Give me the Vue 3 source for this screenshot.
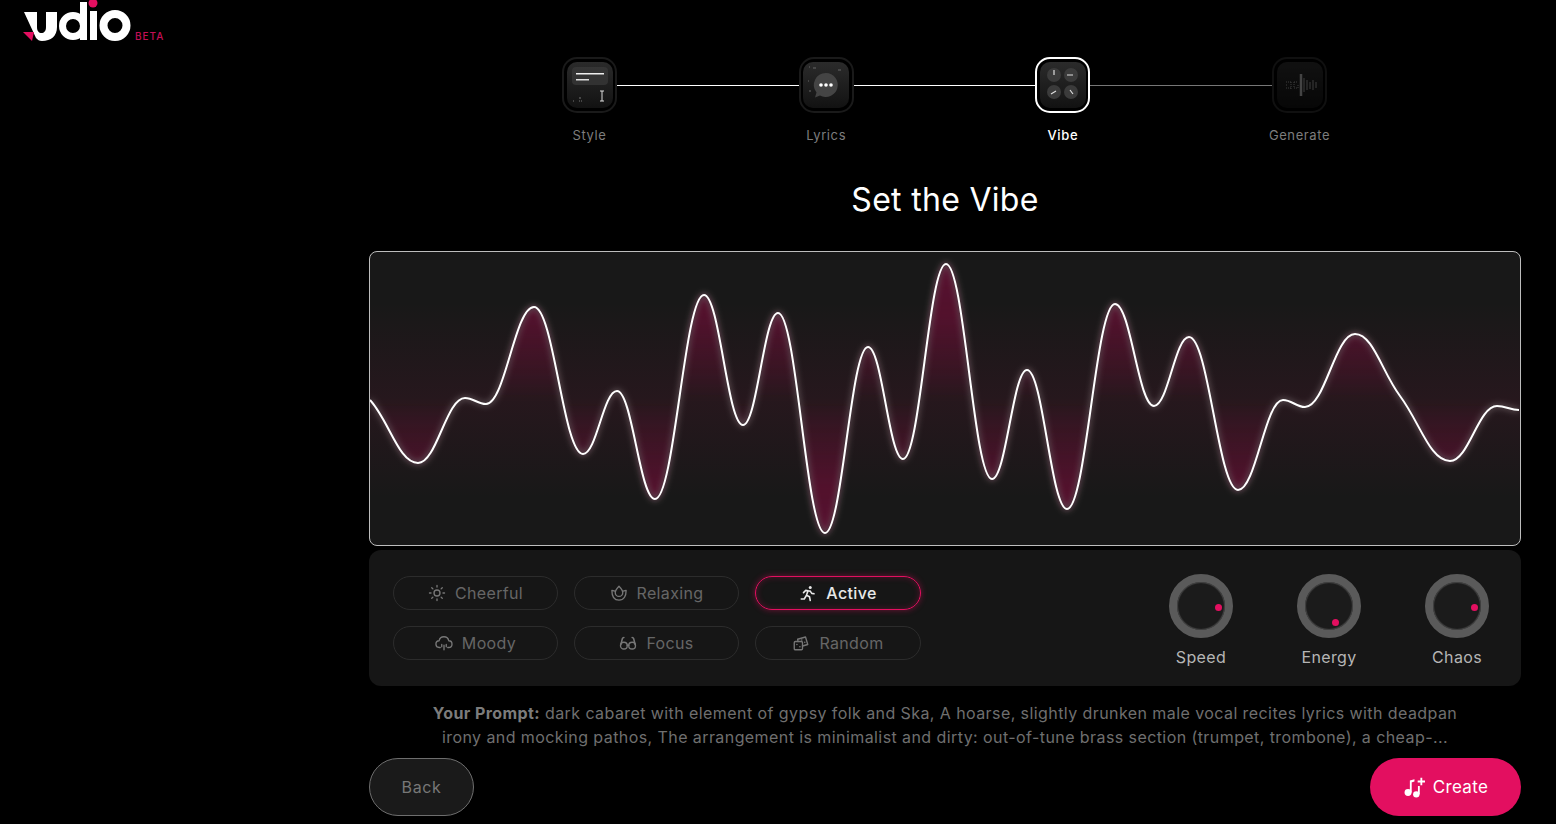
<template>
  <div class="page">
    <aside class="side">
      <div class="logo">
        <svg width="112" height="44" viewBox="0 0 112 44">
          <path d="M1 12h13v15c0 4 2 6 4.500 6s4.500-2 4.500-6V12h11v15c0 9-6 14-15 14-3 0-4-1-6-3L1 12z" fill="#fff" />
          <path d="M0 32h11l-2 9z" fill="#e30f60" />
          <circle cx="50" cy="26" r="10.500" fill="none" stroke="#fff" stroke-width="7" />
          <rect x="57" y="2" width="7" height="38" fill="#fff" />
          <rect x="67" y="11" width="7" height="29" fill="#fff" />
          <circle cx="70" cy="3" r="4.500" fill="#e30f60" />
          <circle cx="92" cy="25.500" r="11.500" fill="none" stroke="#fff" stroke-width="8" />
        </svg>
        <span class="beta">BETA</span>
      </div>
    </aside>

    <main class="main">
      <div class="steps">
        <template v-for="(s, i) in steps" :key="s.name">
          <div class="step" :class="s.state">
            <div class="tile">
              <svg width="46" height="46" viewBox="0 0 46 46">
                <defs>
                  <linearGradient :id="'tile' + i" x1="0" y1="0" x2="0" y2="1">
                    <stop offset="0" stop-color="#2b2b2b" />
                    <stop offset="1" stop-color="#121212" />
                  </linearGradient>
                </defs>
                <rect width="46" height="46" rx="10" :fill="'url(#tile' + i + ')'" />
                <g v-if="s.name === 'Style'">
                  <rect x="5" y="5" width="36" height="18" rx="4" fill="#3a3a3a" opacity=".7" />
                  <rect x="9" y="11" width="28" height="1.500" fill="#eee" />
                  <rect x="9" y="17" width="13" height="1.500" fill="#ddd" />
                  <path d="M33 29h4M35 29v10M33 39h4" stroke="#ddd" stroke-width="1" fill="none" />
                  <path d="M6 39h1M12 36h2M12 39h1M14 39h1" stroke="#777" stroke-width="1" />
                </g>
                <g v-if="s.name === 'Lyrics'">
                  <path d="M23 11a12 12 0 1 1-6 22.500l-5 2 1.500-5A12 12 0 0 1 23 11z" fill="#444" />
                  <circle cx="18" cy="23" r="1.800" fill="#fff" />
                  <circle cx="23" cy="23" r="1.800" fill="#fff" />
                  <circle cx="28" cy="23" r="1.800" fill="#fff" />
                  <path d="M6 5h1M10 6h3M35 8h3M6 29h2M5 19h1" stroke="#666" stroke-width="1" />
                </g>
                <g v-if="s.name === 'Vibe'">
                  <circle cx="14" cy="13" r="7" fill="#3b3b3b" />
                  <circle cx="31" cy="13" r="7" fill="#3b3b3b" />
                  <circle cx="14" cy="30" r="7" fill="#3b3b3b" />
                  <circle cx="31" cy="30" r="7" fill="#3b3b3b" />
                  <path d="M14 8v5M27 13h6M11 32l5-3M30 28l3 4" stroke="#ddd" stroke-width="1.200" />
                </g>
                <g v-if="s.name === 'Generate'" stroke="#999" stroke-width="1">
                  <path d="M9 20h5M9 23h1M9 26h5M14 20v7M17 20h4M17 26h4M17 20v6M21 23v3" stroke-dasharray="1 1" />
                  <path d="M27 16v14M30 18v10M33 20v7M36 18v10M39 20v6" />
                  <path d="M24 12v22" stroke="#aaa" stroke-width="2.500" />
                </g>
              </svg>
            </div>
            <span class="step-label">{{ s.name }}</span>
          </div>
          <div v-if="i < steps.length - 1" class="link" :class="{ dim: s.state === 'current' }"></div>
        </template>
      </div>

      <h1 class="title">Set the Vibe</h1>

      <div class="wave">
        <svg width="1150" height="293" viewBox="0 0 1150 293">
          <defs>
            <linearGradient id="waveFill" gradientUnits="userSpaceOnUse" x1="0" y1="0" x2="0" y2="293">
              <stop offset="0" stop-color="#e30f60" stop-opacity=".32" />
              <stop offset=".22" stop-color="#e30f60" stop-opacity=".28" />
              <stop offset=".34" stop-color="#e30f60" stop-opacity=".18" />
              <stop offset=".43" stop-color="#e30f60" stop-opacity=".09" />
              <stop offset=".505" stop-color="#e30f60" stop-opacity="0" />
              <stop offset=".58" stop-color="#e30f60" stop-opacity=".09" />
              <stop offset=".68" stop-color="#e30f60" stop-opacity=".18" />
              <stop offset=".8" stop-color="#e30f60" stop-opacity=".28" />
              <stop offset="1" stop-color="#e30f60" stop-opacity=".32" />
            </linearGradient>
            <linearGradient id="band" x1="0" y1="0" x2="0" y2="1">
              <stop offset="0" stop-color="#e30f60" stop-opacity="0" />
              <stop offset=".5" stop-color="#e30f60" stop-opacity=".07" />
              <stop offset="1" stop-color="#e30f60" stop-opacity="0" />
            </linearGradient>
            <filter id="soft" x="-5%" y="-20%" width="110%" height="140%">
              <feGaussianBlur stdDeviation="3" />
            </filter>
            <filter id="glow" x="-5%" y="-20%" width="110%" height="140%">
              <feGaussianBlur stdDeviation="3" />
            </filter>
          </defs>
          <rect x="0" y="50" width="1150" height="196" fill="url(#band)" />
          <path :d="fillPath" fill="url(#waveFill)" filter="url(#soft)" />
          <path :d="linePath" fill="none" stroke="#fff" stroke-opacity=".35" stroke-width="3" filter="url(#glow)" />
          <path :d="linePath" fill="none" stroke="#fff" stroke-width="2" />
        </svg>
      </div>

      <div class="controls">
        <div class="moods">
          <button v-for="m in moods" :key="m.name" class="pill" :class="{ on: m.name === 'Active' }">
            <svg class="mood-icon" width="18" height="18" viewBox="0 0 24 24" fill="none" stroke="currentColor" stroke-width="1.800" stroke-linecap="round" stroke-linejoin="round">
              <g v-if="m.name === 'Cheerful'">
                <circle cx="12" cy="12" r="4" />
                <path d="M12 2v2M12 20v2M2 12h2M20 12h2M5 5l1.500 1.500M17.500 17.500L19 19M5 19l1.500-1.500M17.500 6.500L19 5" />
              </g>
              <g v-if="m.name === 'Relaxing'">
                <path d="M12 3c3 3 5 5.500 5 8.500a5 5 0 0 1-10 0C7 8.500 9 6 12 3z" />
                <path d="M6.500 9.500L2.500 8.500c0 7.500 3 13 9.500 13s9.500-5.500 9.500-13l-4 1" />
              </g>
              <g v-if="m.name === 'Moody'">
                <path d="M7 18H6a4.500 4.500 0 0 1-.5-9 6.500 6.500 0 0 1 12.800 0 4.500 4.500 0 0 1-.3 9h-1" />
                <path d="M9 14v3M12 15v6M15 14v3" />
              </g>
              <g v-if="m.name === 'Focus'">
                <circle cx="6.500" cy="15.500" r="4.500" />
                <circle cx="17.500" cy="15.500" r="4.500" />
                <path d="M11 15c.7-.6 1.300-.6 2 0M2.500 14l2-8c.3-1 1-1.500 2-1.500M21.500 14l-2-8c-.3-1-1-1.500-2-1.500" stroke-width="2" />
              </g>
              <g v-if="m.name === 'Active'" stroke-width="2.100">
                <circle cx="15" cy="4.500" r="2" fill="currentColor" stroke="none" />
                <path d="M3 20h4l3-5 4 2 1 5M10 15l2-6-3-.5-3 3M12 9l3 .5 2 3 3 .5" />
              </g>
              <g v-if="m.name === 'Random'">
                <rect x="3" y="10" width="11" height="11" rx="1.500" />
                <path d="M8 10l-.5-3L18 4l3 10-7 2" />
                <path d="M6.500 14h.1M10.500 17h.1M13 8h.1M17 11h.1" stroke-width="2" />
              </g>
            </svg>
            <span>{{ m.name }}</span>
          </button>
        </div>
        <div class="knobs">
          <div v-for="k in knobs" :key="k.name" class="knob-wrap">
            <div class="knob">
              <i class="dot" :style="{ left: k.x + 'px', top: k.y + 'px' }"></i>
            </div>
            <span class="knob-label">{{ k.name }}</span>
          </div>
        </div>
      </div>

      <p class="prompt"><b>Your Prompt:</b> dark cabaret with element of gypsy folk and Ska, A hoarse, slightly drunken male vocal recites lyrics with deadpan irony and mocking pathos, The arrangement is minimalist and dirty: out-of-tune brass section (trumpet, trombone), a cheap-...</p>

      <div class="actions">
        <button class="back">Back</button>
        <button class="create">
          <svg width="22" height="22" viewBox="0 0 24 24" fill="#fff">
            <circle cx="5.500" cy="18" r="3.800" />
            <circle cx="14.500" cy="20" r="3.500" />
            <path d="M7.500 18V7l2-2v13zM16.300 20V11h2v9zM7.500 5l5-1.500v2.500l-5 1.500zM19 2h2v3h3v2h-3v3h-2V7h-3V5h3z" />
          </svg>
          <span>Create</span>
        </button>
      </div>
    </main>
  </div>
</template>

<script setup>
const steps = [
  { name: 'Style', state: 'done' },
  { name: 'Lyrics', state: 'done' },
  { name: 'Vibe', state: 'current' },
  { name: 'Generate', state: 'todo' }
]
const moods = [
  { name: 'Cheerful' },
  { name: 'Relaxing' },
  { name: 'Active' },
  { name: 'Moody' },
  { name: 'Focus' },
  { name: 'Random' }
]
// dot position inside the 64px knob
const knobs = [
  { name: 'Speed', x: 46, y: 30 },
  { name: 'Energy', x: 35, y: 45 },
  { name: 'Chaos', x: 46, y: 30 }
]

// turning points of the wave in page pixels, moved into the svg below
const raw = [
  [370, 400], [418, 463], [465, 398], [486, 404], [534, 307], [583, 454], [617, 391], [655, 499],
  [704, 295], [743, 425], [778, 313], [825, 533], [868, 347], [903, 459], [946, 264], [992, 479],
  [1027, 370], [1067, 509], [1115, 304], [1154, 406], [1189, 337], [1238, 490], [1283, 400],
  [1305, 407], [1355, 334], [1400, 396], [1450, 461], [1497, 406], [1519, 410]
]
const pts = raw.map(([x, y]) => [x - 370, y - 252])
const slope = (i) => {
  if (i === 0) return 1.1
  if (i === pts.length - 1) return 0
  const a = pts[i][1] - pts[i - 1][1]
  const b = pts[i + 1][1] - pts[i][1]
  if (a * b <= 0) return 0
  return (pts[i + 1][1] - pts[i - 1][1]) / (pts[i + 1][0] - pts[i - 1][0])
}
let linePath = `M${pts[0][0]} ${pts[0][1]}`
for (let i = 0; i < pts.length - 1; i++) {
  const d = (pts[i + 1][0] - pts[i][0]) * 0.4
  const c1 = `${pts[i][0] + d} ${pts[i][1] + slope(i) * d}`
  const c2 = `${pts[i + 1][0] - d} ${pts[i + 1][1] - slope(i + 1) * d}`
  linePath += `C${c1} ${c2} ${pts[i + 1][0]} ${pts[i + 1][1]}`
}
const fillPath = `${linePath}L1149 148L0 148Z`
</script>

<style>
html, body {
  margin: 0;
  background: #000;
}
</style>

<style scoped>
.page {
  display: grid;
  grid-template-columns: 369px 1152px;
  height: 824px;
  overflow: hidden;
  background: #000;
  font-family: Inter, "Noto Sans", sans-serif;
  color: #fff;
}
.side {
  padding-left: 23px;
}
.logo {
  display: flex;
  align-items: flex-end;
}
.beta {
  margin: 0 0 2px 0;
  font-size: 10px;
  font-weight: 500;
  letter-spacing: 1px;
  color: #c40f55;
  line-height: 12px;
}
.main {
  display: flex;
  flex-direction: column;
  padding-top: 57px;
}
.steps {
  display: flex;
  align-items: flex-start;
  width: 765px;
  margin-left: 193px;
}
.step {
  position: relative;
  flex: none;
  width: 55px;
  display: flex;
  flex-direction: column;
  align-items: center;
}
.tile {
  box-sizing: border-box;
  width: 55px;
  height: 56px;
  border: 2px solid #1a1a1a;
  border-radius: 15px;
  display: flex;
  align-items: center;
  justify-content: center;
}
.step.current .tile {
  border-color: #fff;
}
.step.todo .tile {
  border-color: #101010;
}
.step.todo .tile svg {
  opacity: .4;
}
.step-label {
  margin-top: 14px;
  font-size: 13px;
  line-height: 16px;
  letter-spacing: .6px;
  white-space: nowrap;
  color: #7d7d7d;
}
.step.current .step-label {
  color: #fff;
  font-weight: 500;
}
.link {
  flex: 1;
  height: 1.500px;
  margin-top: 27.500px;
  background: #fff;
}
.link.dim {
  background: #777;
}
.title {
  margin: 35px 0 0;
  text-align: center;
  font-size: 32px;
  line-height: 44px;
  font-weight: 400;
  letter-spacing: .3px;
}
.wave {
  height: 295px;
  margin-top: 29px;
  box-sizing: border-box;
  border: 1px solid #bdbdbd;
  border-radius: 8px;
  background: #181818;
  overflow: hidden;
}
.wave svg {
  display: block;
}
.controls {
  display: flex;
  justify-content: space-between;
  box-sizing: border-box;
  height: 136px;
  margin-top: 4px;
  padding: 24px 32px 0 24px;
  border-radius: 12px;
  background: #161616;
}
.moods {
  display: grid;
  grid-template-columns: 165px 165px 166px;
  grid-auto-rows: 34px;
  gap: 16px;
  align-content: start;
  padding-top: 2px;
}
.pill {
  display: flex;
  align-items: center;
  justify-content: center;
  gap: 9px;
  padding: 0 0 1px;
  border: 1px solid #2c2c2c;
  border-radius: 17px;
  background: transparent;
  color: #666;
  font: inherit;
  font-size: 16px;
  letter-spacing: .35px;
}
.mood-icon {
  color: #777;
}
.pill.on {
  border-color: #e30f60;
  box-shadow: 0 0 6px rgba(227, 15, 96, .45), inset 0 0 6px rgba(227, 15, 96, .3);
  color: #e8e8e8;
  font-weight: 500;
}
.pill.on .mood-icon {
  color: #e8e8e8;
}
.knobs {
  display: flex;
  gap: 64px;
}
.knob-wrap {
  width: 64px;
  display: flex;
  flex-direction: column;
  align-items: center;
}
.knob {
  position: relative;
  box-sizing: border-box;
  width: 64px;
  height: 64px;
  border: 8px solid #5a5a5a;
  border-radius: 50%;
  background: #1b1b1b;
  box-shadow: inset 0 0 1px 1px #444;
}
.dot {
  position: absolute;
  width: 7px;
  height: 7px;
  margin: -8px 0 0 -8px;
  border-radius: 50%;
  background: #e30f60;
}
.knob-label {
  margin-top: 9px;
  font-size: 16px;
  line-height: 20px;
  letter-spacing: .35px;
  color: #b5b5b5;
  white-space: nowrap;
}
.prompt {
  width: 1040px;
  margin: 15px auto 0;
  text-align: center;
  font-size: 16px;
  line-height: 24px;
  letter-spacing: .42px;
  color: #6f6f6f;
}
.prompt b {
  font-weight: 700;
  color: #7c7c7c;
}
.actions {
  display: flex;
  justify-content: space-between;
  margin-top: 9px;
}
.back, .create {
  height: 58px;
  border-radius: 29px;
  font: inherit;
  font-size: 16px;
  display: flex;
  align-items: center;
  justify-content: center;
}
.back {
  width: 105px;
  border: 1px solid #6e6e6e;
  background: #1a1a1a;
  color: #777;
  letter-spacing: .6px;
}
.create {
  width: 151px;
  gap: 8px;
  border: 0;
  background: #e30f60;
  color: #fff;
  font-size: 17px;
  letter-spacing: .3px;
}
</style>
